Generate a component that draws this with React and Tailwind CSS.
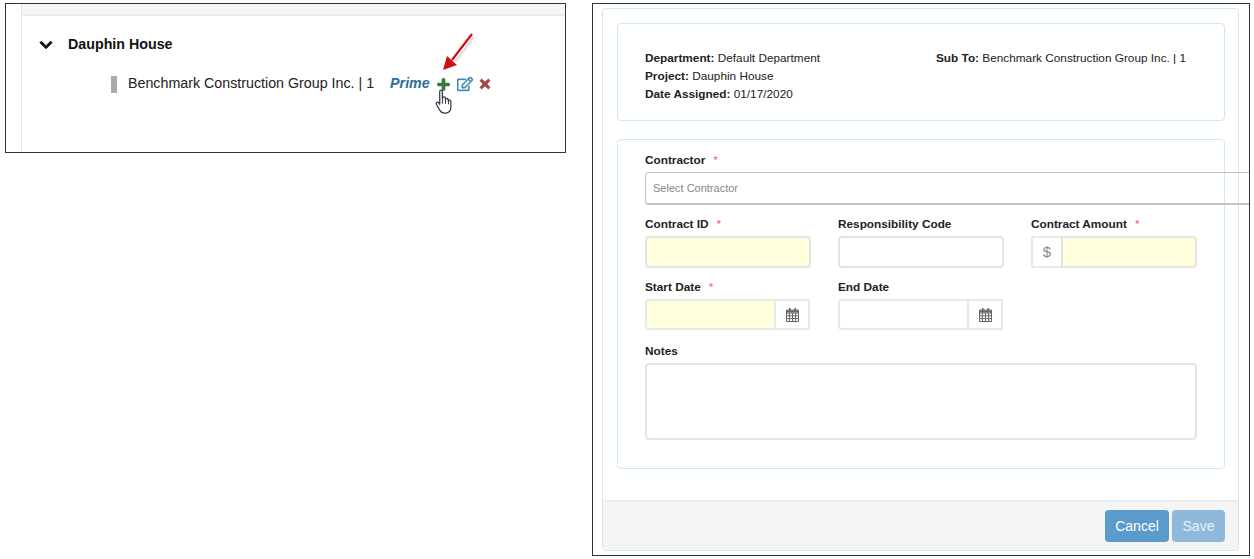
import { FaChevronDown, FaPlus, FaRegEdit, FaTimes } from "react-icons/fa";

function CalendarIcon() {
  return (
    <svg width="13" height="14" viewBox="0 0 13 14" className="text-[#666]">
      <path d="M3 0h1.500v3h-1.500zM8.500 0h1.500v3h-1.500z" fill="currentColor" />
      <path
        d="M0.500 2h12v11.500h-12zM0.500 5h12M0.500 7.800h12M0.500 10.600h12M3.400 5v8.500M6.500 5v8.500M9.600 5v8.500"
        fill="none"
        stroke="currentColor"
        strokeWidth="1"
      />
      <rect x="0.500" y="2.500" width="12" height="2" fill="currentColor" />
    </svg>
  );
}

function HandCursor() {
  return (
    <svg width="20" height="27" viewBox="0 0 17 23" className="absolute left-[429px] top-[85px]">
      <path
        d="M4 2.200c0-1.600 2.300-1.600 2.300 0v6.300l.3-1c.5-1.200 2.300-.9 2.300.4v.8c.5-1 2.200-.8 2.300.5v.7c.6-.9 2.300-.6 2.300.7v4.600c0 3-1.600 5.300-4.600 5.300H8c-2 0-3-.9-4-2.500L1.200 13.200c-.8-1.400.8-2.500 1.900-1.400L4 13z"
        fill="#fff"
        stroke="#3a3f4a"
        strokeWidth="1.100"
        strokeLinejoin="round"
      />
      <path d="M6.300 8.500v4M8.900 8.500v4M11.500 10v3" stroke="#3a3f4a" strokeWidth="0.900" fill="none" />
    </svg>
  );
}

function RedArrow() {
  return (
    <svg width="50" height="50" viewBox="0 0 50 50" className="absolute left-[430px] top-[28px]">
      <path d="M38 5L19 30" stroke="#bbb" strokeWidth="2.500" opacity="0.45" />
      <path d="M36 2L16 28" stroke="#cc0f14" strokeWidth="2.200" />
      <path d="M7 38L11 24L21 33z" fill="#cc0f14" />
    </svg>
  );
}

function Label({ children, required }) {
  return (
    <div className="h-[18px] text-[11.8px] leading-[17px] font-bold text-[#222]">
      {children}
      {required && <span className="ml-2 font-normal text-[#e66]">*</span>}
    </div>
  );
}

function TextBox({ yellow }) {
  return (
    <div
      className={`h-[32px] rounded border-2 border-[#e4e4e4] ${yellow ? "bg-[#ffffdd]" : "bg-white"}`}
    />
  );
}

function DateBox({ yellow }) {
  return (
    <div className="flex h-[31px] w-[165px] rounded-l border-2 border-[#e8e8e8]">
      <div className={`flex-1 rounded-l ${yellow ? "bg-[#ffffdd]" : "bg-white"}`} />
      <div className="flex w-[34px] items-center justify-center border-l-2 border-[#e8e8e8] bg-white">
        <CalendarIcon />
      </div>
    </div>
  );
}

function Field({ label, required, children }) {
  return (
    <div>
      <Label required={required}>{label}</Label>
      <div className="mt-[2px]">{children}</div>
    </div>
  );
}

function ProjectPanel() {
  return (
    <div className="relative h-[150px] w-[561px] shrink-0 border border-[#333] bg-white">
      <div className="ml-[15px] h-full border-l border-[#e2e2e2]">
        <div className="h-[12px] border-b-2 border-[#ececec] bg-[#f6f6f6]" />
        <div className="mt-[18px] flex items-center pl-[17px]">
          <FaChevronDown className="text-[14px] text-[#111]" stroke="currentColor" strokeWidth={30} />
          <span className="ml-[15px] text-[14.25px] font-bold text-[#111]">Dauphin House</span>
        </div>
        <div className="mt-[20px] flex h-[18px] items-center pl-[89px]">
          <div className="h-[17px] w-[6px] bg-[#aaa]" />
          <span className="ml-[11px] pb-[2px] text-[14.25px] text-[#222]">
            Benchmark Construction Group Inc. | 1
          </span>
          <span className="ml-[16px] pb-[2px] text-[14.25px] font-bold text-[#2a6f97] italic">Prime</span>
          <FaPlus className="ml-[7px] text-[13px] text-[#3c763d]" stroke="currentColor" strokeWidth={50} />
          <FaRegEdit className="ml-[7px] text-[16px] text-[#3f87b5]" stroke="currentColor" strokeWidth={12} />
          <FaTimes className="ml-[5px] text-[14px] text-[#a94442]" stroke="currentColor" strokeWidth={30} />
        </div>
      </div>
      <RedArrow />
      <HandCursor />
    </div>
  );
}

function ContractForm() {
  return (
    <div className="h-[553px] w-[658px] shrink-0 overflow-hidden border border-[#333] bg-white pt-[4px] pr-[10px] pl-[9px]">
      <div className="flex h-[543px] flex-col rounded border border-[#c8ecf5] bg-white">
        <div className="flex-1 pt-[14px] pr-[13px] pl-[14px]">
          <div className="flex h-[98px] rounded border border-[#c8ecf5] pt-[25px] pl-[27px] text-[11.8px] leading-[18px] text-[#222]">
            <div className="w-[291px]">
              <div>
                <b>Department:</b> Default Department
              </div>
              <div>
                <b>Project:</b> Dauphin House
              </div>
              <div>
                <b>Date Assigned:</b> 01/17/2020
              </div>
            </div>
            <div>
              <b>Sub To:</b> Benchmark Construction Group Inc. | 1
            </div>
          </div>

          <div className="mt-[18px] h-[330px] rounded border border-[#c8ecf5] pt-[12px] pl-[27px]">
            <Label required>Contractor</Label>
            <div className="mt-[2px] flex h-[33px] w-[620px] items-center rounded border border-b-2 border-[#c2c2c2] pl-[7px] text-[11px] text-[#888]">
              Select Contractor
            </div>
            <div className="mt-[11px] grid w-[552px] grid-cols-3 gap-x-[27px] gap-y-[11px]">
              <Field label="Contract ID" required>
                <TextBox yellow />
              </Field>
              <Field label="Responsibility Code">
                <TextBox />
              </Field>
              <Field label="Contract Amount" required>
                <div className="flex h-[32px]">
                  <div className="flex w-[30px] items-center justify-center border-2 border-r-0 border-[#e8e8e8] text-[15px] text-[#888]">
                    $
                  </div>
                  <div className="flex-1 rounded-r border-2 border-[#e4e4e4] bg-[#ffffdd]" />
                </div>
              </Field>
              <Field label="Start Date" required>
                <DateBox yellow />
              </Field>
              <Field label="End Date">
                <DateBox />
              </Field>
            </div>
            <div className="mt-[13px] w-[552px]">
              <Label>Notes</Label>
              <div className="mt-[2px] h-[77px] rounded border-2 border-[#e4e4e4] bg-white" />
            </div>
          </div>
        </div>
        <div className="flex h-[50px] items-center justify-end gap-[3px] border-t-2 border-[#ececec] bg-[#f4f4f4] pr-[13px]">
          <button className="h-[32px] w-[64px] rounded bg-[#5b9bcb] text-sm text-white">Cancel</button>
          <button className="h-[32px] w-[53px] rounded bg-[#8fb8da] text-sm text-[#e8f1f8]">Save</button>
        </div>
      </div>
    </div>
  );
}

export default function App() {
  return (
    <div className="flex h-[559px] w-[1254px] items-start gap-[26px] overflow-hidden bg-white pt-[3px] pl-[5px] font-['Liberation_Sans',Arial,sans-serif]">
      <ProjectPanel />
      <ContractForm />
    </div>
  );
}
